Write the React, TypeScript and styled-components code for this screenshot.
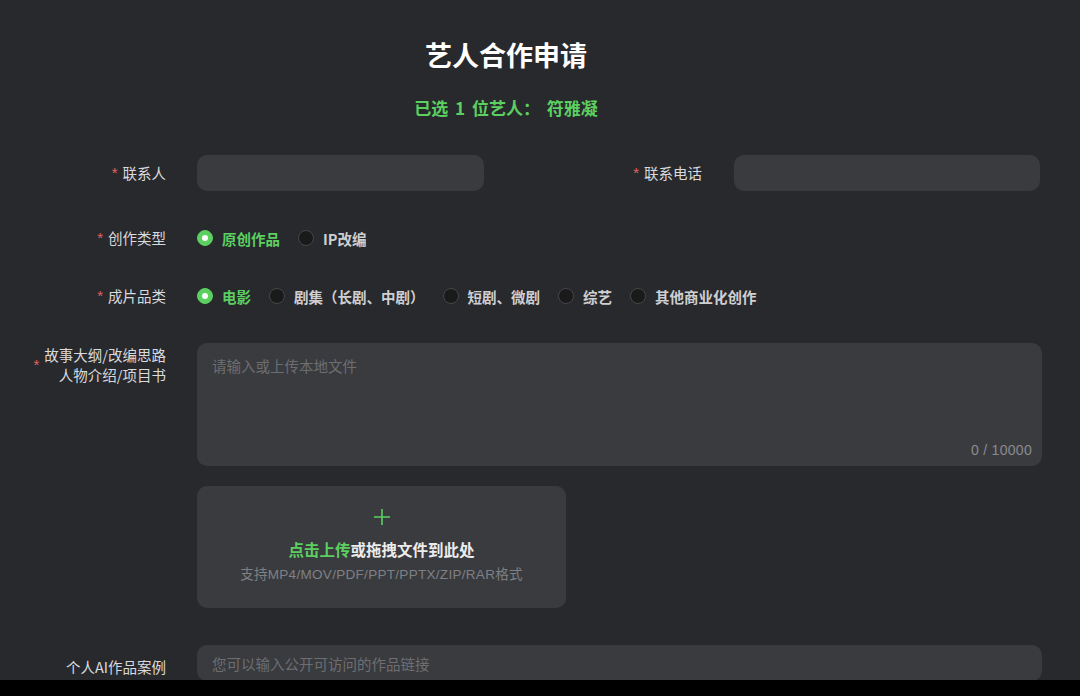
import React from "react";
import styled, { createGlobalStyle } from "styled-components";

const GREEN = "#5ccf61";

const GlobalStyle = createGlobalStyle`
  html, body {
    margin: 0;
    padding: 0;
    background: #000;
  }
  body {
    font-family: "Noto Sans CJK SC", "Noto Sans", sans-serif;
  }
`;

const Page = styled.div`
  height: 680px;
  overflow: hidden;
  background: #28292d;
  color: #d6d6d8;
`;

const Header = styled.div`
  width: 1012px;
  text-align: center;
`;

const Title = styled.h1`
  margin: 0;
  padding-top: 37px;
  font-size: 27px;
  line-height: 36px;
  font-weight: 700;
  color: #fff;
`;

const Selected = styled.div`
  margin-top: 23px;
  font-size: 17px;
  line-height: 24px;
  font-weight: 700;
  word-spacing: 3px;
  color: ${GREEN};
`;

const Form = styled.div`
  display: flex;
  flex-direction: column;
`;

const Row = styled.div<{ $mt: number }>`
  display: flex;
  align-items: center;
  min-height: 36px;
  margin-top: ${(p) => p.$mt}px;
`;

const TopRow = styled(Row)`
  align-items: flex-start;
`;

const Field = styled.div<{ $ml?: number }>`
  display: flex;
  align-items: center;
  margin-left: ${(p) => p.$ml ?? 0}px;
`;

const Label = styled.div<{ $mt?: number }>`
  width: 166px;
  flex-shrink: 0;
  margin-top: ${(p) => p.$mt ?? 0}px;
  display: flex;
  justify-content: flex-end;
  align-items: center;
  font-size: 14.5px;
  line-height: 20px;
  color: #dadadc;
`;

const Star = styled.span`
  color: #e0625f;
  font-size: 15px;
  margin-right: 5px;
  font-family: "Liberation Sans", sans-serif;
`;

const MultiLabel = styled.div`
  text-align: right;
`;

const Control = styled.div<{ $gap?: number }>`
  margin-left: ${(p) => p.$gap ?? 31}px;
`;

const Input = styled.div<{ $w: number }>`
  width: ${(p) => p.$w}px;
  height: 36px;
  box-sizing: border-box;
  background: #3a3b3f;
  border-radius: 10px;
  padding: 0 15px;
  display: flex;
  align-items: center;
  font-size: 14.5px;
  color: #6d6e72;
`;

const Options = styled.div`
  display: flex;
  align-items: center;
  gap: 18px;
`;

const Option = styled.label<{ $on?: boolean }>`
  display: flex;
  align-items: center;
  gap: 9px;
  font-size: 14.5px;
  font-weight: 700;
  color: ${(p) => (p.$on ? GREEN : "#cfcfd1")};
`;

const Dot = styled.span<{ $on?: boolean }>`
  width: 16px;
  height: 16px;
  box-sizing: border-box;
  border-radius: 50%;
  display: flex;
  align-items: center;
  justify-content: center;
  background: ${(p) => (p.$on ? GREEN : "#1a1a1b")};
  border: 1px solid ${(p) => (p.$on ? GREEN : "#45464a")};
  &::after {
    content: "";
    width: 6px;
    height: 6px;
    border-radius: 50%;
    background: ${(p) => (p.$on ? "#fff" : "transparent")};
  }
`;

const TextArea = styled.div`
  width: 845px;
  height: 123px;
  box-sizing: border-box;
  background: #3a3b3f;
  border-radius: 10px;
  padding: 12px 10px 5px 15px;
  display: flex;
  flex-direction: column;
  justify-content: space-between;
  font-size: 14.5px;
  line-height: 22px;
`;

const Placeholder = styled.span`
  color: #6d6e72;
`;

const Counter = styled.span`
  align-self: flex-end;
  color: #8a8b8f;
  font-size: 14px;
  font-family: "Liberation Sans", sans-serif;
  letter-spacing: 0.3px;
`;

const Upload = styled.div`
  width: 369px;
  height: 122px;
  box-sizing: border-box;
  background: #3a3b3f;
  border-radius: 10px;
  display: flex;
  flex-direction: column;
  align-items: center;
  padding-top: 22px;
`;

const UploadText = styled.div`
  margin-top: 12px;
  font-size: 15.5px;
  line-height: 22px;
  font-weight: 700;
  color: #ececec;
`;

const Green = styled.span`
  color: ${GREEN};
`;

const UploadHint = styled.div`
  margin-top: 6px;
  font-family: "Liberation Sans", "Noto Sans CJK SC", sans-serif;
  font-size: 13.5px;
  letter-spacing: 0.3px;
  line-height: 18px;
  color: #7f8084;
`;

const Plus = () => (
  <svg width="18" height="18" viewBox="0 0 18 18">
    <path d="M9 1v16M1 9h16" stroke={GREEN} strokeWidth="1.6" fill="none" />
  </svg>
);

const types = [{ t: "原创作品", on: true }, { t: "IP改编" }];
const cats = [
  { t: "电影", on: true },
  { t: "剧集（长剧、中剧）" },
  { t: "短剧、微剧" },
  { t: "综艺" },
  { t: "其他商业化创作" },
];

export default function App() {
  return (
    <Page>
      <GlobalStyle />
      <Header>
        <Title>艺人合作申请</Title>
        <Selected>已选 1 位艺人： 符雅凝</Selected>
      </Header>
      <Form>
        <Row $mt={35}>
          <Field>
            <Label>
              <Star>*</Star>联系人
            </Label>
            <Control>
              <Input $w={287} />
            </Control>
          </Field>
          <Field $ml={52}>
            <Label>
              <Star>*</Star>联系电话
            </Label>
            <Control $gap={32}>
              <Input $w={306} />
            </Control>
          </Field>
        </Row>
        <Row $mt={29}>
          <Label>
            <Star>*</Star>创作类型
          </Label>
          <Control>
            <Options>
              {types.map((o) => (
                <Option key={o.t} $on={o.on}>
                  <Dot $on={o.on} />
                  {o.t}
                </Option>
              ))}
            </Options>
          </Control>
        </Row>
        <Row $mt={22}>
          <Label>
            <Star>*</Star>成片品类
          </Label>
          <Control>
            <Options>
              {cats.map((o) => (
                <Option key={o.t} $on={o.on}>
                  <Dot $on={o.on} />
                  {o.t}
                </Option>
              ))}
            </Options>
          </Control>
        </Row>
        <TopRow $mt={29}>
          <Label $mt={2}>
            <Star>*</Star>
            <MultiLabel>
              故事大纲/改编思路
              <br />
              人物介绍/项目书
            </MultiLabel>
          </Label>
          <Control>
            <TextArea>
              <Placeholder>请输入或上传本地文件</Placeholder>
              <Counter>0 / 10000</Counter>
            </TextArea>
          </Control>
        </TopRow>
        <Row $mt={20}>
          <Label />
          <Control>
            <Upload>
              <Plus />
              <UploadText>
                <Green>点击上传</Green>或拖拽文件到此处
              </UploadText>
              <UploadHint>支持MP4/MOV/PDF/PPT/PPTX/ZIP/RAR格式</UploadHint>
            </Upload>
          </Control>
        </Row>
        <TopRow $mt={37}>
          <Label $mt={12}>个人AI作品案例</Label>
          <Control>
            <Input $w={845}>您可以输入公开可访问的作品链接</Input>
          </Control>
        </TopRow>
      </Form>
    </Page>
  );
}
